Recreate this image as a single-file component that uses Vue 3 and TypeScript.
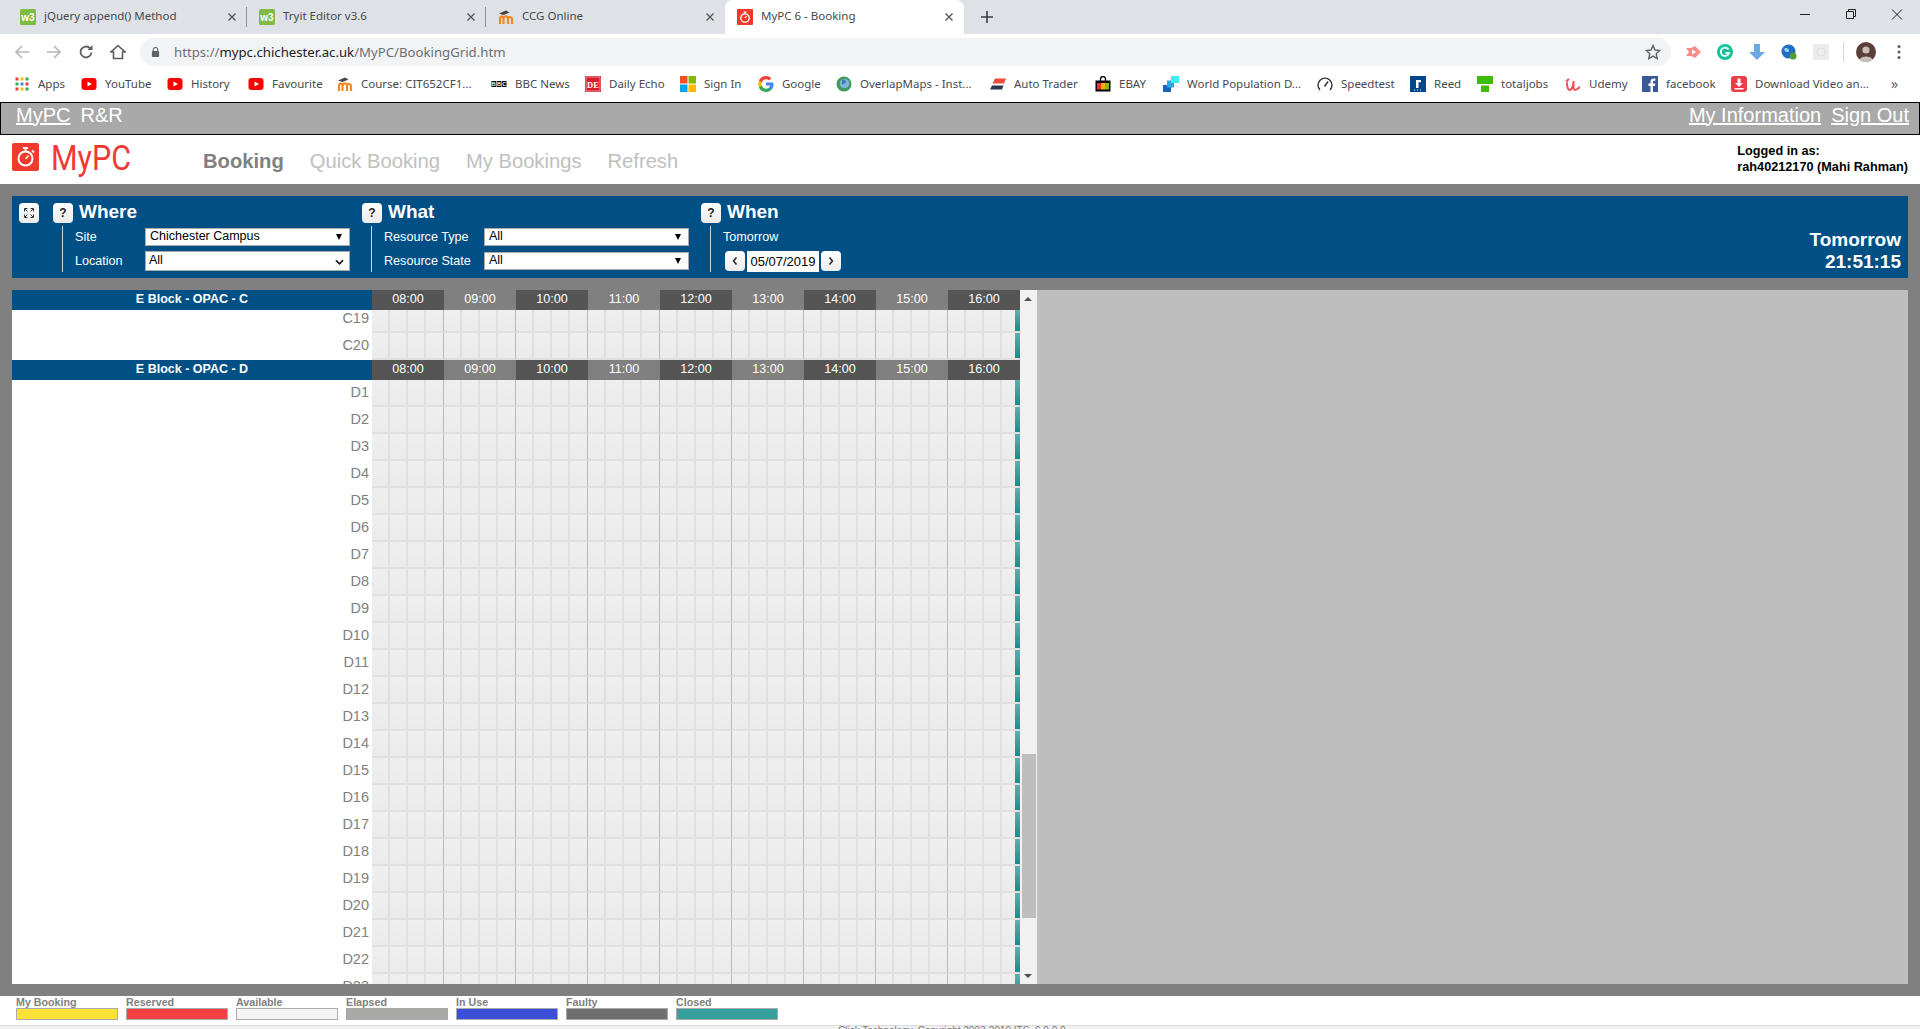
<script setup lang="ts">
const w3 = '<rect width="16" height="16" rx="1.5" fill="#7cbd42"/><text x="8" y="11.5" font-family="Liberation Sans" font-size="10" font-weight="700" fill="#fff" text-anchor="middle">w3</text>'
const moodle = '<path d="M2 15V9.5c0-2 2.5-2.5 3.5-1 1-1.500 4-1.500 4.500.5 1-1.500 4-1 4 1V15" fill="none" stroke="#f08a24" stroke-width="2.200"/><path d="M5.500 8.500V15M10 9V15" stroke="#f08a24" stroke-width="2.200"/><path d="M1 4.500 8 1.500l3.500 2-6 2.500z" fill="#444"/>'
const yt = '<rect x="0.500" y="2" width="15" height="12" rx="3" fill="#f00"/><path d="M6.500 5.500v5L11 8z" fill="#fff"/>'
const mypc = '<rect width="16" height="16" rx="1" fill="#ef3a2d"/><circle cx="8" cy="9" r="4.200" fill="none" stroke="#fff" stroke-width="1.300"/><path d="M8 3v1.500M6.500 3h3M8 9l1.500-2" stroke="#fff" stroke-width="1.200"/>'

const icons: Record<string, string> = {
  w3, moodle, yt, mypc,
  apps: [0, 1, 2].flatMap((r) => [0, 1, 2].map((c) => `<rect x="${1.5 + c * 5}" y="${1.5 + r * 5}" width="3" height="3" fill="${['#ea4335', '#fbbc05', '#34a853', '#4285f4'][(r * 2 + c) % 4]}"/>`)).join(''),
  bbc: '<g fill="#000"><rect x="0.500" y="5" width="4.600" height="6"/><rect x="5.700" y="5" width="4.600" height="6"/><rect x="10.900" y="5" width="4.600" height="6"/></g><g fill="#fff" font-family="Liberation Sans" font-size="5.500" font-weight="700" text-anchor="middle"><text x="2.800" y="10">B</text><text x="8" y="10">B</text><text x="13.200" y="10">C</text></g>',
  de: '<rect width="16" height="16" fill="#d81e2c"/><rect x="1" y="1" width="14" height="14" fill="none" stroke="#fff" stroke-width=".5"/><text x="8" y="11.500" font-family="Liberation Serif" font-size="8.500" font-weight="700" fill="#fff" text-anchor="middle">DE</text>',
  ms: '<rect x="0" y="0" width="7.500" height="7.500" fill="#f25022"/><rect x="8.500" y="0" width="7.500" height="7.500" fill="#7fba00"/><rect x="0" y="8.500" width="7.500" height="7.500" fill="#00a4ef"/><rect x="8.500" y="8.500" width="7.500" height="7.500" fill="#ffb900"/>',
  google: '<path d="M15.500 8.200c0-.6-.1-1.100-.2-1.600H8v3h4.200c-.2 1-.7 1.800-1.600 2.400v2h2.600c1.500-1.400 2.300-3.400 2.300-5.800z" fill="#4285f4"/><path d="M8 16c2.200 0 4-.7 5.200-2l-2.600-2c-.7.500-1.500.8-2.600.8-2 0-3.700-1.400-4.300-3.200H1v2.100C2.300 14.300 5 16 8 16z" fill="#34a853"/><path d="M3.700 9.600c-.3-1-.3-2.100 0-3.200V4.300H1c-1 2.100-1 5.200 0 7.400z" fill="#fbbc05"/><path d="M8 3.200c1.200 0 2.200.4 3 1.200l2.300-2.300C11.900.8 10.100 0 8 0 5 0 2.300 1.700 1 4.300l2.700 2.100C4.300 4.600 6 3.200 8 3.200z" fill="#ea4335"/>',
  overlap: '<circle cx="8" cy="8" r="7.500" fill="#3f9a55"/><circle cx="8.500" cy="7.500" r="4.800" fill="#7db4d8"/><path d="M6 4c2-1 4 0 4 2s-3 1-4 3z" fill="#3b7fb0"/>',
  auto: '<path d="M5 2.500h11L14 7.500H2.500z" fill="#ee4b3a"/><path d="M2 9.500h11.500L12 13.500H0z" fill="#2b3650"/>',
  ebay: '<path d="M5.500 5V3a2.500 2.500 0 0 1 5 0v2" fill="none" stroke="#000" stroke-width="1.300"/><rect x="0.500" y="4.500" width="15" height="11" fill="#000"/><rect x="2" y="7" width="4" height="6.500" fill="#e53238"/><rect x="6" y="7" width="4" height="6.500" fill="#f5af02"/><rect x="10" y="7" width="4" height="6.500" fill="#86b817"/>',
  world: '<rect x="0" y="9" width="8" height="7" fill="#1565c0"/><rect x="4" y="4.500" width="7" height="7" fill="#29a9e0"/><rect x="8" y="0" width="8" height="7" fill="#3df0f0"/>',
  speed: '<path d="M3 14A7 7 0 1 1 13 14" fill="none" stroke="#333" stroke-width="1.400"/><path d="M7.500 10.500 11 5.500" stroke="#333" stroke-width="1.500"/>',
  reed: '<rect width="16" height="16" fill="#00468b"/><path d="M6 12V4h5v2.200H8.500V12z" fill="#fff"/><path d="M4 14h1M7 14h1M10 14h1" stroke="#fff"/>',
  total: '<rect x="0" y="0" width="16" height="8" fill="#3fbc08"/><rect x="4" y="9.500" width="8" height="6.500" fill="#3fbc08"/>',
  udemy: '<path d="M1.500 6c1 0 0 8 3 8s4-6 4-9c0 5-.5 9 1.500 9s3-2 5-3M1 5.500 4 3" fill="none" stroke="#ec5252" stroke-width="2"/>',
  fb: '<rect width="16" height="16" fill="#3b5998"/><path d="M11 16V10h2l.3-2.500H11V6c0-.7.300-1.200 1.200-1.200h1.200V2.500c-2.800-.4-4.900.300-4.900 3.200v1.800H6.500V10h2v6z" fill="#fff"/>',
  dl: '<rect width="16" height="16" rx="3" fill="#ef3b46"/><path d="M6.500 2.500h3V7H12L8 11 4 7h2.500zM3.500 12h9v1.500h-9z" fill="#fff"/>',
  none: '',
}

const tabs = [
  { icon: 'w3', title: 'jQuery append() Method', active: false },
  { icon: 'w3', title: 'Tryit Editor v3.6', active: false },
  { icon: 'moodle', title: 'CCG Online', active: false },
  { icon: 'mypc', title: 'MyPC 6 - Booking', active: true },
]

const bookmarks = [
  { icon: 'apps', label: 'Apps', w: 67 },
  { icon: 'yt', label: 'YouTube', w: 86 },
  { icon: 'yt', label: 'History', w: 81 },
  { icon: 'yt', label: 'Favourite', w: 89 },
  { icon: 'moodle', label: 'Course: CIT652CF1...', w: 154 },
  { icon: 'bbc', label: 'BBC News', w: 94 },
  { icon: 'de', label: 'Daily Echo', w: 95 },
  { icon: 'ms', label: 'Sign In', w: 78 },
  { icon: 'google', label: 'Google', w: 78 },
  { icon: 'overlap', label: 'OverlapMaps - Inst...', w: 154 },
  { icon: 'auto', label: 'Auto Trader', w: 105 },
  { icon: 'ebay', label: 'EBAY', w: 68 },
  { icon: 'world', label: 'World Population D...', w: 154 },
  { icon: 'speed', label: 'Speedtest', w: 93 },
  { icon: 'reed', label: 'Reed', w: 67 },
  { icon: 'total', label: 'totaljobs', w: 88 },
  { icon: 'udemy', label: 'Udemy', w: 77 },
  { icon: 'fb', label: 'facebook', w: 89 },
  { icon: 'dl', label: 'Download Video an...', w: 150 },
]

const hours = ['08:00', '09:00', '10:00', '11:00', '12:00', '13:00', '14:00', '15:00', '16:00']
const dRows = Array.from({ length: 23 }, (_, i) => `D${i + 1}`)

const legend = [
  { label: 'My Booking', color: '#fce136' },
  { label: 'Reserved', color: '#f34041' },
  { label: 'Available', color: '#f4f4f4' },
  { label: 'Elapsed', color: '#a9a9a7' },
  { label: 'In Use', color: '#3c4fd8' },
  { label: 'Faulty', color: '#6f6f6f' },
  { label: 'Closed', color: '#36a09c' },
]
</script>

<template>
  <div class="page">
    <div class="browser">
      <div class="tabstrip">
        <div v-for="t in tabs" :key="t.title" class="tab" :class="{ active: t.active }">
          <svg class="fav" viewBox="0 0 16 16" v-html="icons[t.icon]"></svg>
          <span class="tab-title">{{ t.title }}</span>
          <svg class="tab-x" viewBox="0 0 8 8"><path d="M0.500 0.500l7 7M7.500 0.500l-7 7" stroke="#555" stroke-width="1.300" /></svg>
        </div>
        <svg class="newtab" viewBox="0 0 12 12"><path d="M6 0v12M0 6h12" stroke="#3c4043" stroke-width="1.600" /></svg>
        <div class="winctl">
          <svg viewBox="0 0 46 14"><path d="M18 7.500h10" stroke="#222" /></svg>
          <svg viewBox="0 0 46 14"><path d="M18.500 4.500h7v7h-7zM20.500 4.500v-2h7v7h-2" fill="none" stroke="#222" /></svg>
          <svg viewBox="0 0 46 14"><path d="M18 2.500l10 10M28 2.500l-10 10" stroke="#222" /></svg>
        </div>
      </div>

      <div class="toolbar">
        <button class="tb"><svg viewBox="0 0 16 16"><path d="M15 8H2M8 2L2 8l6 6" fill="none" stroke="#b4b7bb" stroke-width="1.700" /></svg></button>
        <button class="tb"><svg viewBox="0 0 16 16"><path d="M1 8h13M8 2l6 6-6 6" fill="none" stroke="#b4b7bb" stroke-width="1.700" /></svg></button>
        <button class="tb"><svg viewBox="0 0 16 16"><path d="M13.500 8.500A5.500 5.500 0 1 1 12 4.200" fill="none" stroke="#5a5d61" stroke-width="1.800" /><path d="M14.500 1v5h-5z" fill="#5a5d61" /></svg></button>
        <button class="tb"><svg viewBox="0 0 16 16"><path d="M8 1.500L1 8h2.500v6.500h9V8H15z" fill="none" stroke="#5a5d61" stroke-width="1.600" /></svg></button>
        <div class="omni">
          <svg class="lock" viewBox="0 0 10 12"><path d="M2.500 5V3.500a2.500 2.500 0 0 1 5 0V5" fill="none" stroke="#5f6368" stroke-width="1.200" /><rect x="1" y="5" width="8" height="6.500" rx="1" fill="#5f6368" /></svg>
          <span class="url"><span class="dim">https://</span>mypc.chichester.ac.uk<span class="dim">/MyPC/BookingGrid.htm</span></span>
          <svg class="star" viewBox="0 0 16 16"><path d="M8 1.500l2 4.500 4.800.5-3.600 3.200 1 4.800L8 12.100l-4.200 2.400 1-4.800L1.200 6.500 6 6z" fill="none" stroke="#5f6368" stroke-width="1.400" /></svg>
        </div>
        <div class="exts">
          <svg viewBox="0 0 16 16"><path d="M1 4h5l4-2 6 6-6 6-4-2H1l3-4z" fill="#ff8a8a" /><path d="M7 5.500v5L11 8z" fill="#fff" /></svg>
          <svg viewBox="0 0 16 16"><circle cx="8" cy="8" r="8" fill="#15c39a" /><path d="M11.500 5.500A4.200 4.200 0 1 0 12 9H8.500" fill="none" stroke="#fff" stroke-width="1.800" /></svg>
          <svg viewBox="0 0 16 16"><path d="M5 0h6v8h5l-8 8-8-8h5z" fill="#6aa9e4" /></svg>
          <svg viewBox="0 0 16 16"><circle cx="7.500" cy="7.500" r="7" fill="#1c6fc4" /><path d="M3 5c2-2 4-1 5 1S5 9 4 7z" fill="#9fd0f2" /><circle cx="12" cy="12" r="3.500" fill="#5a9a2a" /></svg>
          <svg viewBox="0 0 16 16"><rect width="16" height="16" fill="#ececec" /><circle cx="8" cy="8" r="4" fill="none" stroke="#dcdcdc" /></svg>
        </div>
        <span class="tb-div"></span>
        <svg class="avatar" viewBox="0 0 20 20"><circle cx="10" cy="10" r="10" fill="#5a4038" /><circle cx="10" cy="8" r="3.600" fill="#c9bdb8" /><path d="M3.500 17.500c1-4 12-4 13 0A10 10 0 0 1 3.500 17.500z" fill="#c9bdb8" /></svg>
        <svg class="menu" viewBox="0 0 4 16"><circle cx="2" cy="2.500" r="1.500" fill="#5a5d61" /><circle cx="2" cy="8" r="1.500" fill="#5a5d61" /><circle cx="2" cy="13.500" r="1.500" fill="#5a5d61" /></svg>
      </div>

      <div class="bookmarks">
        <div v-for="b in bookmarks" :key="b.label" class="bm" :style="{ width: b.w + 'px' }">
          <svg class="fav" viewBox="0 0 16 16" v-html="icons[b.icon]"></svg>
          <span>{{ b.label }}</span>
        </div>
        <span class="more">»</span>
      </div>
    </div>

    <div class="topbar">
      <a class="tl ul">MyPC</a>
      <a class="tl">R&amp;R</a>
      <span class="spacer"></span>
      <a class="tl ul">My Information</a>
      <a class="tl ul">Sign Out</a>
    </div>

    <header class="head">
      <svg class="logo" viewBox="0 0 27 28">
        <rect width="27" height="28" rx="2" fill="#ef3a2d" />
        <circle cx="13.500" cy="15.500" r="7" fill="none" stroke="#fff" stroke-width="2" />
        <path d="M11 5h5M13.500 5v3M20 7.500l2 2" stroke="#fff" stroke-width="1.800" />
        <path d="M13.500 16l3-3.500" stroke="#fff" stroke-width="1.500" />
      </svg>
      <span class="brand">MyPC</span>
      <nav class="nav">
        <a class="cur">Booking</a>
        <a>Quick Booking</a>
        <a>My Bookings</a>
        <a>Refresh</a>
      </nav>
      <div class="logged">Logged in as:<br />rah40212170 (Mahi Rahman)</div>
    </header>

    <main class="main">
      <section class="panel">
        <button class="mini full"><svg viewBox="0 0 10 10"><path d="M0.500 3.500v-3h3M6.500 0.500h3v3M9.500 6.500v3h-3M3.500 9.500h-3v-3M1 1l2.500 2.500M9 1L6.500 3.500M9 9L6.500 6.500M1 9l2.500-2.500" fill="none" stroke="#333" stroke-width="1" /></svg></button>

        <div class="sect where">
          <div class="sect-h"><button class="mini">?</button><h2>Where</h2></div>
          <div class="sect-b">
            <div class="frow"><label>Site</label><div class="sel">Chichester Campus<i class="tri"></i></div></div>
            <div class="frow"><label>Location</label><div class="sel tall">All<svg class="chev" viewBox="0 0 10 6"><path d="M1 1l4 4 4-4" fill="none" stroke="#111" stroke-width="1.800" /></svg></div></div>
          </div>
        </div>

        <div class="sect what">
          <div class="sect-h"><button class="mini">?</button><h2>What</h2></div>
          <div class="sect-b">
            <div class="frow"><label>Resource Type</label><div class="sel">All<i class="tri"></i></div></div>
            <div class="frow"><label>Resource State</label><div class="sel">All<i class="tri"></i></div></div>
          </div>
        </div>

        <div class="sect when">
          <div class="sect-h"><button class="mini">?</button><h2>When</h2></div>
          <div class="sect-b">
            <div class="frow"><label>Tomorrow</label></div>
            <div class="frow date">
              <button class="mini"><svg viewBox="0 0 6 10"><path d="M4.500 1.500L1.500 5l3 3.500" fill="none" stroke="#222" stroke-width="1.500" /></svg></button>
              <div class="dt">05/07/2019</div>
              <button class="mini"><svg viewBox="0 0 6 10"><path d="M1.500 1.500L4.500 5l-3 3.500" fill="none" stroke="#222" stroke-width="1.500" /></svg></button>
            </div>
          </div>
        </div>

        <div class="clock">Tomorrow<br />21:51:15</div>
      </section>

      <section class="gridwrap">
        <div class="grid">
          <div class="ghead">
            <div class="gname">E Block - OPAC - C</div>
            <div v-for="h in hours" :key="h" class="hr">{{ h }}</div>
          </div>
          <div class="row first">
            <div class="rlabel">C19</div>
            <div v-for="h in hours" :key="h" class="hcell"><i v-for="q in 4" :key="q" class="q"></i></div>
            <span class="closed"></span>
          </div>
          <div class="row">
            <div class="rlabel">C20</div>
            <div v-for="h in hours" :key="h" class="hcell"><i v-for="q in 4" :key="q" class="q"></i></div>
            <span class="closed"></span>
          </div>
          <div class="ghead">
            <div class="gname">E Block - OPAC - D</div>
            <div v-for="h in hours" :key="h" class="hr">{{ h }}</div>
          </div>
          <div v-for="d in dRows" :key="d" class="row">
            <div class="rlabel">{{ d }}</div>
            <div v-for="h in hours" :key="h" class="hcell"><i v-for="q in 4" :key="q" class="q"></i></div>
            <span class="closed"></span>
          </div>
        </div>
        <div class="sbar">
          <i class="up"></i>
          <i class="thumb"></i>
          <i class="down"></i>
        </div>
        <div class="rest"></div>
      </section>
    </main>

    <footer class="foot">
      <div class="legend">
        <div v-for="l in legend" :key="l.label" class="lg">
          <div class="lg-t">{{ l.label }}</div>
          <div class="lg-s" :style="{ background: l.color }"></div>
        </div>
      </div>
      <div class="copy"><span>Click Technology, Copyright 2003-2019 ITS, 6.0.0.0</span></div>
    </footer>
  </div>
</template>

<style>
html, body { margin: 0; height: 100%; overflow: hidden; background: #fff; }
</style>

<style scoped>
.page { width: 1920px; height: 1029px; display: flex; flex-direction: column; overflow: hidden; font-family: "Liberation Sans", Arial, sans-serif; }
button { padding: 0; font-family: inherit; }

/* browser chrome */
.browser { height: 102px; flex: none; font-family: "Noto Sans", "Open Sans", sans-serif; color: #3c4043; }
.tabstrip { height: 34px; background: #dee1e6; display: flex; padding-left: 8px; position: relative; }
.tab { width: 239px; box-sizing: border-box; height: 34px; display: flex; align-items: center; padding: 0 10px 0 12px; font-size: 11.5px; position: relative; color: #45494e; }
.tab::after { content: ""; position: absolute; right: 0; top: 7px; height: 20px; width: 1px; background: #8f9297; }
.tab:nth-child(3)::after, .tab.active::after { display: none; }
.tab.active { background: #fff; border-radius: 8px 8px 0 0; height: 38px; padding-bottom: 4px; z-index: 1; }
.fav { width: 16px; height: 16px; flex: none; }
.tab-title { margin-left: 8px; flex: 1; white-space: nowrap; line-height: 14px; padding-bottom: 2px; }
.tab-x { width: 8px; height: 8px; flex: none; margin-right: 1px; }
.newtab { width: 12px; height: 12px; margin: 11px 0 0 17px; }
.winctl { position: absolute; right: 0; top: 7px; display: flex; }
.winctl svg { width: 46px; height: 14px; }
.toolbar { height: 32px; box-sizing: border-box; padding: 4px 0 0 6px; background: #fff; display: flex; align-items: center; position: relative; }
.tb { width: 32px; height: 28px; border: 0; background: none; display: flex; align-items: center; justify-content: center; }
.tb svg { width: 16px; height: 16px; }
.omni { width: 1531px; height: 28px; margin-left: 6px; border-radius: 14px; background: #f1f3f4; display: flex; align-items: center; padding: 0 10px 0 11px; box-sizing: border-box; position: relative; z-index: 2; }
.lock { width: 9px; height: 12px; margin-left: 0; }
.url { margin-left: 14px; font-size: 13.200px; color: #202124; flex: 1; white-space: nowrap; }
.dim { color: #6b6f74; }
.star { width: 16px; height: 16px; margin-right: 0; }
.exts { display: flex; margin-left: 6px; width: 166px; }
.exts svg { width: 16px; height: 16px; margin: 0 8px; flex: none; }
.tb-div { width: 1px; height: 20px; background: #d5d7da; margin-left: 0; }
.avatar { width: 20px; height: 20px; margin-left: 12px; }
.menu { width: 4px; height: 16px; margin-left: 21px; }
.bookmarks { height: 36px; background: #fff; display: flex; align-items: center; padding-left: 14px; font-size: 11.5px; color: #45494e; position: relative; }
.bm { display: flex; align-items: center; flex: none; box-sizing: border-box; white-space: nowrap; }
.bm span { margin-left: 8px; line-height: 14px; padding-bottom: 1px; }
.more { position: absolute; left: 1891px; top: 8px; font-size: 14px; color: #5f6368; }

/* app top bar */
.topbar { height: 33px; flex: none; box-sizing: border-box; border: 1px solid #000; background: #a9a9a9; display: flex; align-items: center; padding: 0 10px 0 15px; gap: 10px; font-size: 20px; color: #fff; }
.tl { line-height: 22px; margin-top: -8px; }
.ul { text-decoration: underline; }
.spacer { flex: 1; }

.head { height: 49px; flex: none; background: #fff; display: flex; align-items: center; padding: 0 12px; }
.logo { width: 27px; height: 28px; margin-top: -5px; flex: none; }
.brand { font-family: Roboto, sans-serif; font-weight: 400; font-size: 35px; color: #ef3a35; margin-left: 12px; width: 81px; margin-top: -2px; transform: scaleX(.87); transform-origin: left center; line-height: 40px; }
.nav { display: flex; gap: 26px; margin-left: 71px; font-size: 20.200px; color: #c0c0c0; margin-top: 4px; }
.cur { color: #808080; font-weight: 700; }
.logged { margin-left: auto; font-size: 12.700px; font-weight: 700; line-height: 15.500px; color: #000; white-space: nowrap; margin-top: 0; }

.main { flex: 1; background: #808080; padding: 12px 12px; display: flex; flex-direction: column; gap: 12px; min-height: 0; }

/* filter panel */
.panel { height: 82px; flex: none; background: #005085; display: flex; padding-left: 7px; color: #fff; box-sizing: border-box; }
.mini { width: 20px; height: 20px; border: 0; border-radius: 4px; background: linear-gradient(#fff, #ececec); color: #222; font-weight: 700; font-size: 12px; display: flex; align-items: center; justify-content: center; flex: none; }
.mini svg { height: 10px; width: 10px; }
.full { margin: 7px 14px 0 0; }
.sect { padding-top: 7px; }
.where { width: 309px; }
.what { width: 339px; }
.sect-h { display: flex; align-items: center; gap: 6px; height: 20px; }
h2 { margin: 0; font-size: 19px; font-weight: 700; line-height: 20px; padding-bottom: 2px; }
.sect-b { margin: 3px 0 0 9px; padding-left: 12px; border-left: 1px solid #c9d6e0; height: 46px; display: flex; flex-direction: column; gap: 2px; font-size: 12.600px; }
.frow { display: flex; align-items: center; height: 22px; }
label { line-height: 14px; padding-bottom: 1px; }
.where label { width: 70px; }
.what label { width: 100px; }
.sel { width: 205px; height: 18px; box-sizing: border-box; border: 1px solid #a9a9a9; background: #fff; color: #000; font-size: 12.500px; line-height: 15px; padding-left: 4px; position: relative; }
.sel.tall { height: 20px; line-height: 17px; padding-left: 3px; }
.what .sel { padding-left: 4px; }
.tri { position: absolute; right: 7px; top: 5px; border-left: 3px solid transparent; border-right: 3px solid transparent; border-top: 6px solid #000; }
.chev { position: absolute; right: 5px; top: 7px; width: 9px; height: 6px; }
.date { gap: 2px; margin-left: 2px; }
.dt { width: 72px; height: 21px; background: #fff; color: #000; line-height: 21px; text-align: center; font-size: 13px; }
.clock { margin-left: auto; align-self: flex-end; text-align: right; font-size: 19px; font-weight: 700; line-height: 22px; padding: 0 7px 5px 0; }

/* grid */
.gridwrap { flex: 1; min-height: 0; display: flex; overflow: hidden; background: #bebebe; }
.grid { width: 1008px; flex: none; overflow: hidden; background: #fff; }
.ghead { display: flex; height: 20px; }
.gname { width: 360px; background: #005085; color: #fff; font-size: 12.500px; font-weight: 700; text-align: center; line-height: 19px; flex: none; }
.hr { width: 72px; flex: none; background: #555; color: #fff; font-size: 12.600px; line-height: 19px; text-align: center; }
.hr:nth-child(odd) { background: #808080; }
.row { display: flex; height: 27px; position: relative; }
.row.first { height: 23px; align-items: flex-end; }
.rlabel { width: 360px; flex: none; box-sizing: border-box; padding-right: 3px; text-align: right; font-size: 14.500px; color: #808080; line-height: 25px; height: 27px; }
.hcell { width: 72px; flex: none; height: 100%; display: flex; }
.q { width: 18px; box-sizing: border-box; height: 100%; background: linear-gradient(#efefef, #ebebeb); border-right: 2px solid #e0e0e0; border-bottom: 2px solid #e0e0e0; }
.q:last-child { border-right: 1px solid #b9b9b9; }
.closed { position: absolute; right: 0; top: 0; bottom: 2px; width: 5px; background: linear-gradient(#62aeaa, #158f8a); }
.sbar { width: 17px; flex: none; background: #f1f1f1; position: relative; }
.up, .down { position: absolute; left: 4px; border-left: 4px solid transparent; border-right: 4px solid transparent; }
.up { top: 7px; border-bottom: 4px solid #505050; }
.down { bottom: 6px; border-top: 4px solid #505050; }
.thumb { position: absolute; left: 2px; right: 1px; top: 464px; height: 164px; background: #bebebe; }
.rest { flex: 1; background: #bebebe; }

/* footer */
.foot { height: 33px; flex: none; background: #fff; display: flex; flex-direction: column; }
.legend { height: 29px; flex: none; display: flex; gap: 8px; padding-left: 16px; box-sizing: border-box; }
.lg { width: 102px; }
.lg-t { font-size: 10.700px; font-weight: 700; color: #808080; line-height: 12px; height: 13px; white-space: nowrap; }
.lg-s { height: 10px; box-sizing: content-box; border: 1px solid #aaa; margin-top: -1px; width: 100px; }
.copy { flex: 1; background: #f0f0f0; border-top: 1px solid #ddd; font-size: 10px; color: #777; padding-left: 838px; overflow: hidden; line-height: 10px; }
</style>
